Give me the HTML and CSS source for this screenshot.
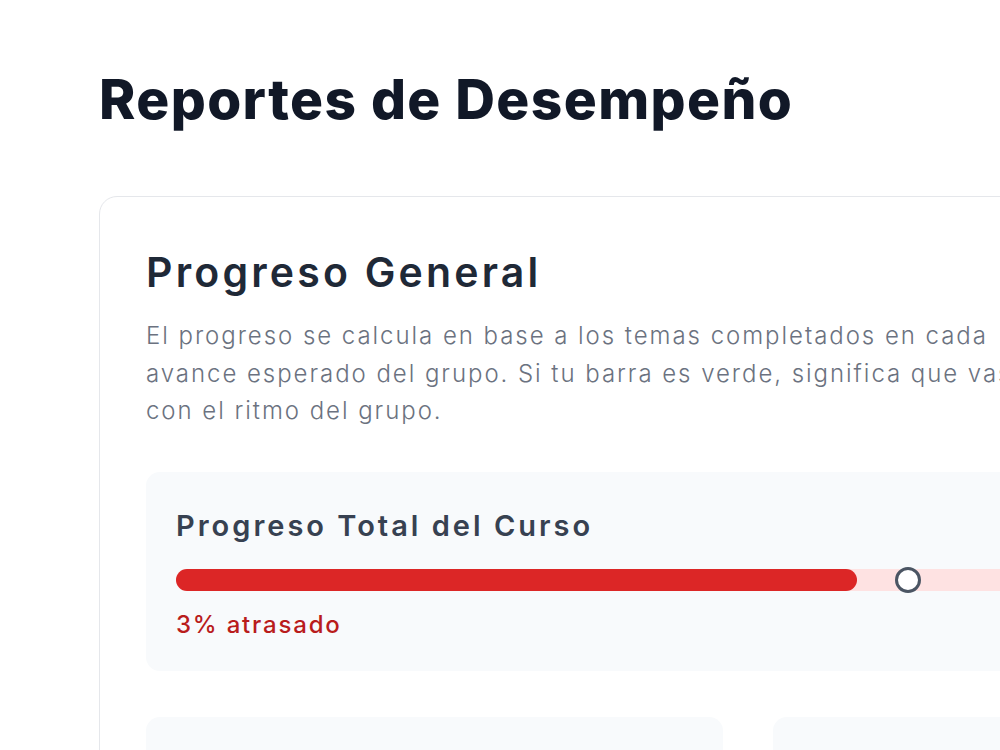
FILE: index.html
```html
<!DOCTYPE html>
<html lang="es">
<head>
    <meta charset="UTF-8">
    <meta name="viewport" content="width=device-width, initial-scale=1.0">
    <title>Reportes de Desempeño</title>
    <link rel="stylesheet" href="styles.css">
</head>
<body>
    <main class="page">
        <h1 class="page-title">Reportes de Desempeño</h1>

        <section class="card">
            <h2 class="card-title">Progreso General</h2>
            <p class="card-text">
                <span class="line">El progreso se calcula en base a los temas completados en cada</span>
                <span class="line">avance esperado del grupo. Si tu barra es verde, significa que vas</span>
                <span class="line">con el ritmo del grupo.</span>
            </p>

            <div class="total-box">
                <h3 class="total-title">Progreso Total del Curso</h3>
                <div class="progress-track">
                    <div class="progress-fill" style="width: 59.5%"></div>
                    <span class="progress-marker" style="left: 64%"></span>
                </div>
                <p class="progress-status">3% atrasado</p>
            </div>

            <div class="subject-grid">
                <div class="subject-card"></div>
                <div class="subject-card"></div>
            </div>
        </section>
    </main>
</body>
</html>
```

FILE: styles.css
```css
html,
body {
    margin: 0;
    overflow: hidden;
}

body {
    background-color: #fff;
    font-family: Inter, "Noto Sans", sans-serif;
    color: #111827;
}

.page {
    width: 1400px;
    padding: 62px 0 0 99px;
    box-sizing: border-box;
}

.page-title {
    margin: 0 0 60px;
    font-size: 55px;
    line-height: 74px;
    font-weight: 800;
    letter-spacing: 1.4px;
    color: #111827;
}

.card {
    width: 1298px;
    box-sizing: border-box;
    padding: 46px 46px 48px;
    border: 1px solid #e5e7eb;
    border-radius: 18px;
    background: #fff;
}

.card-title {
    margin: 0 0 16px;
    font-size: 41px;
    line-height: 58px;
    font-weight: 600;
    letter-spacing: 3.2px;
    color: #1f2937;
}

.card-text {
    margin: 0 0 42px;
    font-size: 24px;
    line-height: 37.5px;
    font-weight: 300;
    letter-spacing: 1.95px;
    color: #6b7280;
}

.line {
    display: block;
    white-space: nowrap;
}

.total-box {
    padding: 33px 30px 28px;
    border-radius: 14px;
    background: #f8fafc;
}

.total-title {
    margin: 0 0 22px;
    font-size: 29px;
    line-height: 42px;
    font-weight: 600;
    letter-spacing: 3px;
    color: #374151;
}

.progress-track {
    position: relative;
    height: 22px;
    border-radius: 11px;
    background: #fee2e2;
}

.progress-fill {
    height: 100%;
    border-radius: 11px;
    background: #dc2626;
}

.progress-marker {
    position: absolute;
    top: 50%;
    width: 20px;
    height: 20px;
    margin: -13px 0 0 -13px;
    border: 3px solid #4b5563;
    border-radius: 50%;
    background: #fff;
}

.progress-status {
    margin: 16px 0 0;
    font-size: 24px;
    line-height: 36px;
    font-weight: 500;
    letter-spacing: 1.8px;
    color: #b91c1c;
}

.subject-grid {
    display: grid;
    grid-template-columns: 1fr 1fr;
    gap: 50px;
    margin-top: 46px;
}

.subject-card {
    height: 260px;
    border-radius: 14px;
    background: #f8fafc;
}
```
